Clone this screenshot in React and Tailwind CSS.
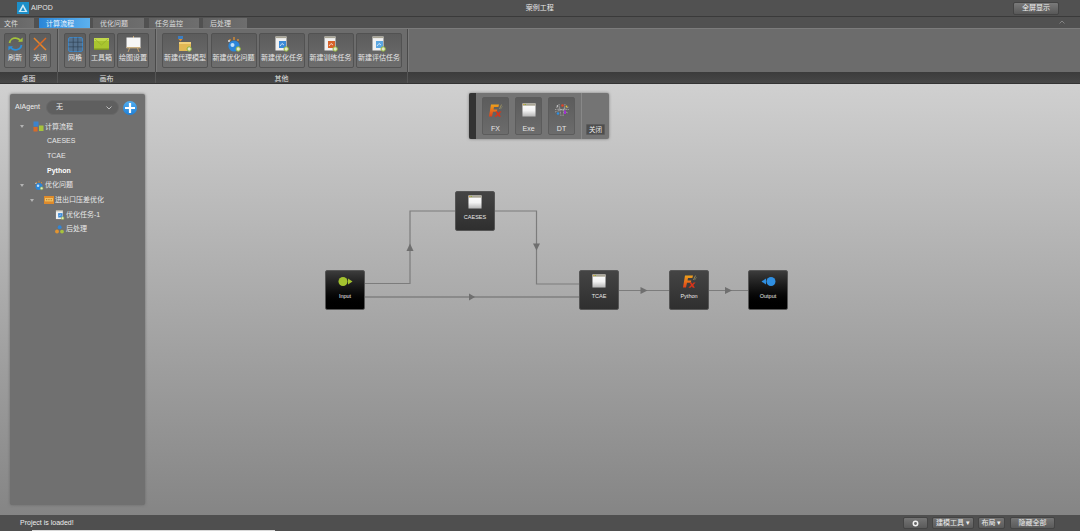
function WindowIcon({ s = 14 }) {
  return (
    <svg width={s} height={s} viewBox="0 0 15 15">
      <defs>
        <linearGradient id="win" x1="0" y1="0" x2="0" y2="1">
          <stop offset="0" stopColor="#ffffff" />
          <stop offset="0.55" stopColor="#f2f2f2" />
          <stop offset="1" stopColor="#b5b5b5" />
        </linearGradient>
      </defs>
      <rect x="0.5" y="0.5" width="14" height="14" fill="url(#win)" />
      <rect x="0.5" y="0.5" width="14" height="2.4" fill="#a9a595" />
      <rect x="1.2" y="1" width="1.3" height="1.2" fill="#e0a030" />
      <rect x="3" y="1" width="1.3" height="1.2" fill="#8cae3c" />
    </svg>
  );
}

function FxIcon({ s = 15 }) {
  return (
    <svg width={s} height={s} viewBox="0 0 15 15">
      <defs>
        <linearGradient id="fx" x1="0" y1="0" x2="0" y2="1">
          <stop offset="0" stopColor="#eda21c" />
          <stop offset="1" stopColor="#e2401a" />
        </linearGradient>
      </defs>
      <path d="M3 1.5H11L10.4 4H6L5.5 6.4H9.3L8.7 8.8H5L4 13.5H1Z" fill="url(#fx)" />
      <path d="M7.5 8.6H9.6L10.4 10 11.6 8.6H13.6L11.3 11.1 12.9 13.8H10.8L9.9 12.2 8.5 13.8H6.4L9 11Z" fill="#d8341a" />
      <path d="M11.5 6 13.5 1.6" stroke="#a89a60" strokeWidth="0.8" fill="none" />
      <path d="M12.6 6.2 14.5 3.2" stroke="#8b8b70" strokeWidth="0.6" fill="none" />
    </svg>
  );
}

function DtIcon() {
  return (
    <svg width="16" height="16" viewBox="0 0 16 16">
      <path d="M1 10 15 5M2 5 14 11M1 7.5H15M5 2 7 14M11 2 9 14" stroke="#c5c5c5" strokeWidth="0.6" strokeDasharray="1 0.6" fill="none" />
      <circle cx="8.5" cy="3.5" r="1.3" fill="#e0442a" />
      <circle cx="4" cy="11.5" r="1.3" fill="#2f8fe0" />
      <rect x="10" y="8.5" width="2" height="3.5" fill="#a030d0" />
      <circle cx="12.5" cy="4.5" r="0.9" fill="#e8c030" />
      <circle cx="3.5" cy="4" r="0.8" fill="#f0f0f0" />
    </svg>
  );
}

function RefreshIcon() {
  return (
    <svg width="17" height="16" viewBox="0 0 17 16" fill="none">
      <path d="M2.5 7C3 3.5 6 1.8 9 2.2 11 2.4 12.6 3.4 13.5 5" stroke="#a3c23b" strokeWidth="1.8" />
      <path d="M11 5.8H15.6V1.4Z" fill="#a3c23b" />
      <path d="M14.5 9C14 12.5 11 14.2 8 13.8 6 13.6 4.4 12.6 3.5 11" stroke="#2d8fd8" strokeWidth="1.8" />
      <path d="M6 10.2H1.4V14.6Z" fill="#2d8fd8" />
    </svg>
  );
}

function CloseIcon() {
  return (
    <svg width="16" height="16" viewBox="0 0 16 16" fill="none">
      <path d="M2 2 14 14" stroke="#e8842a" strokeWidth="1.5" />
      <path d="M14 2 2 14" stroke="#e06a22" strokeWidth="1.5" />
    </svg>
  );
}

function GridIcon() {
  return (
    <svg width="15" height="15" viewBox="0 0 15 15" fill="none">
      <rect x="0.5" y="0.5" width="14" height="14" rx="1.5" fill="#56718c" stroke="#3f86c4" />
      <path d="M5.2 0.5V14.5M9.8 0.5V14.5M0.5 5.2H14.5M0.5 9.8H14.5" stroke="#2c3d4e" strokeWidth="0.6" />
    </svg>
  );
}

function ToolboxIcon() {
  return (
    <svg width="15" height="12" viewBox="0 0 15 12">
      <rect x="0" y="0" width="15" height="12" fill="#a9c52f" />
      <rect x="0" y="0" width="15" height="3" fill="#c1d84b" />
      <path d="M1 1 7.5 7 14 1" stroke="#8ea528" strokeWidth="0.6" fill="none" />
      <rect x="0" y="10.5" width="15" height="1.5" fill="#7f9424" />
    </svg>
  );
}

function EaselIcon() {
  return (
    <svg width="15" height="16" viewBox="0 0 15 16">
      <path d="M4 11 2 16M11 11 13 16M7.5 0V2" stroke="#caa46a" strokeWidth="1" />
      <rect x="0.5" y="1.5" width="14" height="10.5" fill="#f6f6f6" />
      <rect x="0.5" y="11" width="14" height="1.4" fill="#c9b084" />
    </svg>
  );
}

function Badge() {
  return <circle cx="12.2" cy="13" r="2.2" fill="#e6e6c8" stroke="#8fb53a" strokeWidth="1" />;
}

function ModelIcon() {
  return (
    <svg width="16" height="17" viewBox="0 0 16 17">
      <rect x="1" y="0" width="5" height="3" fill="#3d7dc0" />
      <path d="M1.5 3H5.5L3.5 5.5Z" fill="#e09030" />
      <rect x="2" y="6" width="12" height="9" fill="#e2b854" />
      <rect x="2" y="6" width="12" height="2" fill="#f0d07c" />
      <Badge />
    </svg>
  );
}

function OptIcon({ s = 16 }) {
  return (
    <svg width={s} height={s + 1} viewBox="0 0 16 17">
      <circle cx="8" cy="10" r="5.6" fill="#2b86d9" />
      <circle cx="6.5" cy="9" r="2" fill="#bfe0fa" />
      <path d="M4 3V5M8 1V4M12 3V5" stroke="#e09030" strokeWidth="1.3" />
      <circle cx="3" cy="5" r="1" fill="#e2e2e2" />
      <Badge />
    </svg>
  );
}

function DocIcon({ c = "#3a8ad8", s = 16 }) {
  return (
    <svg width={s} height={s} viewBox="0 0 16 16">
      <rect x="1.5" y="0.5" width="11" height="14" fill="#f1f1f1" />
      <rect x="1.5" y="0.5" width="11" height="1.6" fill="#a9a595" />
      <rect x="5" y="5" width="7" height="7" fill={c} />
      <path d="M6 10 8 7.5 10 9" stroke="#fff" strokeWidth="0.7" fill="none" />
      <Badge />
    </svg>
  );
}

function FlowIcon() {
  return (
    <svg width="11" height="11" viewBox="0 0 11 11">
      <rect x="0.5" y="0.5" width="5" height="5" fill="#3c83cc" />
      <rect x="0.5" y="6" width="4" height="4.5" fill="#d86a2a" />
      <rect x="6" y="4.5" width="4.5" height="5.5" fill="#a7c43c" />
    </svg>
  );
}

function FolderIcon() {
  return (
    <svg width="10" height="8" viewBox="0 0 10 8">
      <rect x="0" y="0" width="10" height="8" fill="#dd8a2c" />
      <rect x="1" y="2" width="8" height="3.4" fill="#f1c261" />
      <path d="M2 3.7H8" stroke="#a85f1a" strokeWidth="0.8" strokeDasharray="1 0.7" />
    </svg>
  );
}

function PostIcon() {
  return (
    <svg width="9" height="9" viewBox="0 0 9 9">
      <circle cx="4.7" cy="2.2" r="1.9" fill="#2f86d8" />
      <circle cx="2" cy="6.5" r="1.9" fill="#e39430" />
      <circle cx="7" cy="6.6" r="1.9" fill="#a8c23d" />
    </svg>
  );
}

function Tri() {
  return <span className="w-0 h-0 border-l-[2.5px] border-r-[2.5px] border-t-[3px] border-l-transparent border-r-transparent border-t-[#b4b4b4]" />;
}

function RibbonBtn({ w, icon, label }) {
  return (
    <button
      style={{ width: w }}
      className="h-[35px] shrink-0 flex flex-col items-center rounded-[2px] border border-[#525252] bg-gradient-to-b from-[#5c5c5c] to-[#6e6e6e] pt-[1px]"
    >
      <span className="h-[18px] flex items-center justify-center">{icon}</span>
      <span className="text-[7px] leading-[10px] text-[#e6e6e6] whitespace-nowrap">{label}</span>
    </button>
  );
}

function Tab({ w, pl, label, active }) {
  return (
    <div
      style={{ width: w, paddingLeft: pl }}
      className={
        "h-[10px] mt-[1px] text-[7px] leading-[11px] whitespace-nowrap " +
        (active
          ? "bg-gradient-to-r from-[#2a86d8] to-[#5cb1ee] text-[#f0f6fb]"
          : "bg-gradient-to-r from-[#626262] to-[#6e6e6e] text-[#dcdcdc]")
      }
    >
      {label}
    </div>
  );
}

function Sep() {
  return <div className="w-px self-stretch bg-[#4a4a4a] shadow-[1px_0_0_#7a7a7a]" />;
}

function TreeRow({ indent, tri, icon, label, strong }) {
  return (
    <div className="h-[14.7px] flex items-center" style={{ paddingLeft: indent }}>
      {tri && <span className="w-[13px] flex items-center shrink-0"><Tri /></span>}
      {icon && <span className="shrink-0 mr-[1px] flex justify-center items-center w-[11px]">{icon}</span>}
      <span className={"text-[7px] whitespace-nowrap " + (strong ? "text-white font-bold" : "text-[#e8e8e8]")}>{label}</span>
    </div>
  );
}

function Node({ x, y, black, icon, label }) {
  return (
    <div
      style={{ left: x, top: y - 84 }}
      className={
        "absolute w-[40px] h-[40px] rounded-[2px] border border-[#555] flex flex-col items-center pt-[1px] " +
        (black ? "bg-gradient-to-b from-[#3c3c3c] to-[#000]" : "bg-gradient-to-b from-[#444] to-[#2f2f2f]")
      }
    >
      <span className="h-[18px] flex items-center justify-center">{icon}</span>
      <span className="mt-[2px] text-[5.5px] leading-[8px] text-[#eaeaea]">{label}</span>
    </div>
  );
}

function Arrow({ d }) {
  return <path d={d} fill="#6f6f6f" />;
}

function Links() {
  const line = { stroke: "#7c7c7c", strokeWidth: 1.2, fill: "none" };
  return (
    <svg className="absolute inset-0 w-full h-full" viewBox="0 84 1080 431">
      <path d="M365 283.5H410V211H455" {...line} />
      <path d="M495 211H536.5V284H579" {...line} />
      <path d="M365 297H579" stroke="#7f7f7f" strokeWidth="1.4" fill="none" />
      <path d="M618 290.5H669" {...line} />
      <path d="M708 290.5H748" {...line} />
      <Arrow d="M410 243.5 413.5 251H406.5Z" />
      <Arrow d="M536.5 250.5 533 243.5H540Z" />
      <Arrow d="M475 297 469 293.5V300.5Z" />
      <Arrow d="M647.5 290.5 640.5 287V294Z" />
      <Arrow d="M732 290.5 725 287V294Z" />
    </svg>
  );
}

function PaletteBtn({ icon, label }) {
  return (
    <button className="w-[27px] h-[38px] shrink-0 flex flex-col items-center rounded-[2px] border border-[#5c5c5c] bg-gradient-to-b from-[#5c5c5c] to-[#6c6c6c] pt-[3px]">
      <span className="h-[18px] flex items-center justify-center">{icon}</span>
      <span className="mt-[5px] text-[7px] leading-[10px] text-[#e6e6e6]">{label}</span>
    </button>
  );
}

function FootBtn({ w, children }) {
  return (
    <button
      style={{ width: w }}
      className="h-[12px] rounded-[2px] border border-[#444] bg-gradient-to-b from-[#757575] to-[#5a5a5a] text-[7px] leading-[10px] text-[#ececec] flex items-center justify-center whitespace-nowrap"
    >
      {children}
    </button>
  );
}

export default function App() {
  const font = { fontFamily: '"Liberation Sans", "Noto Sans CJK SC", sans-serif' };
  return (
    <div style={font} className="relative w-[1080px] h-[531px] overflow-hidden flex flex-col bg-[#505050]">
      {/* title bar */}
      <div className="h-[17px] shrink-0 flex items-center bg-[#515151] pl-[17px] pr-[21px] border-b border-[#3a3a3a]">
        <svg width="12" height="12" viewBox="0 0 12 12">
          <rect width="12" height="12" fill="#1c8fc9" />
          <path d="M6 2 10.5 10H1.5Z" fill="#cfeaf6" />
          <path d="M6 5 8 9H4Z" fill="#1c8fc9" />
        </svg>
        <span className="ml-[2px] text-[7px] text-[#e4e4e4]">AIPOD</span>
        <span className="ml-[473px] text-[7px] text-[#e8e8e8]">案例工程</span>
        <button className="ml-auto w-[46px] h-[13px] rounded-[2px] border border-[#444] bg-gradient-to-b from-[#7a7a7a] to-[#585858] text-[7px] leading-[10px] text-[#eeeeee]">全屏显示</button>
      </div>

      {/* tabs */}
      <div className="h-[11px] shrink-0 flex items-start bg-[#515151] relative">
        <Tab w={34} pl={4} label="文件" />
        <div className="ml-[5px]"><Tab w={51} pl={7} label="计算流程" active /></div>
        <div className="ml-[3px]"><Tab w={51} pl={7} label="优化问题" /></div>
        <div className="ml-[5px]"><Tab w={50} pl={6} label="任务监控" /></div>
        <div className="ml-[4px]"><Tab w={44} pl={7} label="后处理" /></div>
        <svg className="absolute right-[15px] top-[3px]" width="6" height="4" viewBox="0 0 6 4" fill="none">
          <path d="M0.5 3.5 3 1 5.5 3.5" stroke="#9a9a9a" strokeWidth="0.7" />
        </svg>
      </div>

      {/* ribbon */}
      <div className="h-[44px] shrink-0 flex items-center bg-[#6c6c6c] border-t border-[#7c7c7c]">
        <div className="w-[57px] h-full flex items-center gap-[3px] pl-[4px]">
          <RibbonBtn w={22} icon={<RefreshIcon />} label="刷新" />
          <RibbonBtn w={22} icon={<CloseIcon />} label="关闭" />
        </div>
        <Sep />
        <div className="w-[97px] h-full flex items-center gap-[2.5px] pl-[6px]">
          <RibbonBtn w={22} icon={<GridIcon />} label="网格" />
          <RibbonBtn w={26} icon={<ToolboxIcon />} label="工具箱" />
          <RibbonBtn w={32} icon={<EaselIcon />} label="绘图设置" />
        </div>
        <Sep />
        <div className="w-[251px] h-full flex items-center gap-[2.5px] pl-[6px]">
          <RibbonBtn w={46} icon={<ModelIcon />} label="新建代理模型" />
          <RibbonBtn w={46} icon={<OptIcon />} label="新建优化问题" />
          <RibbonBtn w={46} icon={<DocIcon />} label="新建优化任务" />
          <RibbonBtn w={46} icon={<DocIcon c="#d8622a" />} label="新建训练任务" />
          <RibbonBtn w={46} icon={<DocIcon c="#5aa6e2" />} label="新建评估任务" />
        </div>
        <Sep />
      </div>

      {/* ribbon group labels */}
      <div className="h-[12px] shrink-0 flex bg-gradient-to-b from-[#3c3c3c] to-[#474747] text-[7px] leading-[13px] text-[#e2e2e2] border-b border-[#333]">
        <div className="w-[57px] text-center">桌面</div>
        <div className="w-px bg-[#555]" />
        <div className="w-[97px] text-center">画布</div>
        <div className="w-px bg-[#555]" />
        <div className="w-[251px] text-center">其他</div>
        <div className="w-px bg-[#555]" />
      </div>

      {/* canvas */}
      <div className="relative flex-1 min-h-0 bg-gradient-to-b from-[#d0d0d0] to-[#858585] p-[10px]">
        <Links />
        <aside className="relative w-[135px] h-full rounded-[2px] bg-[#707070] shadow-[0_0_3px_#6a6a6a] pt-[5px]">
          <div className="flex items-center h-[17px] pl-[5px]">
            <span className="text-[7px] text-[#eeeeee] w-[31px]">AIAgent</span>
            <div className="w-[73px] h-[15px] rounded-full bg-[#5f5f5f] border border-[#686868] flex items-center justify-between pl-[9px] pr-[6px] text-[7px] text-[#eeeeee]">
              无
              <svg width="6" height="4" viewBox="0 0 6 4" fill="none"><path d="M0.5 0.5 3 3 5.5 0.5" stroke="#d8d8d8" strokeWidth="0.8" /></svg>
            </div>
            <svg className="ml-[4px]" width="14" height="14" viewBox="0 0 14 14">
              <defs>
                <linearGradient id="plus" x1="0" y1="0" x2="0" y2="1">
                  <stop offset="0" stopColor="#52aef0" />
                  <stop offset="1" stopColor="#1f7fd6" />
                </linearGradient>
              </defs>
              <circle cx="7" cy="7" r="7" fill="url(#plus)" />
              <path d="M7 2V12M2 7H12" stroke="#fff" strokeWidth="2.2" />
            </svg>
          </div>
          <div className="mt-[3.5px]">
            <TreeRow indent={10} tri icon={<FlowIcon />} label="计算流程" />
            <TreeRow indent={37} label="CAESES" />
            <TreeRow indent={37} label="TCAE" />
            <TreeRow indent={37} label="Python" strong />
            <TreeRow indent={10} tri icon={<OptIcon s={10} />} label="优化问题" />
            <TreeRow indent={20} tri icon={<FolderIcon />} label="进出口压差优化" />
            <TreeRow indent={44} icon={<DocIcon s={10} />} label="优化任务-1" />
            <TreeRow indent={44} icon={<PostIcon />} label="后处理" />
          </div>
        </aside>

        {/* floating palette */}
        <div className="absolute left-[469px] top-[9px] w-[140px] h-[46px] flex items-center rounded-[2px] bg-[#747474] shadow-[0_0_3px_#777]">
          <div className="w-[7px] h-full bg-[#333] rounded-l-[2px]" />
          <div className="flex items-center gap-[6px] pl-[6px] w-[105px] h-full">
            <PaletteBtn icon={<FxIcon />} label="FX" />
            <PaletteBtn icon={<WindowIcon />} label="Exe" />
            <PaletteBtn icon={<DtIcon />} label="DT" />
          </div>
          <div className="w-px h-full bg-[#888]" />
          <div className="flex-1 h-full flex items-end pb-[4px] pl-[4px]">
            <button className="w-[19px] h-[11px] bg-[#4e4e4e] border border-[#5c5c5c] text-[6.5px] leading-[9px] text-[#eeeeee] rounded-[1px]">关闭</button>
          </div>
        </div>

        <Node x={325} y={270} black label="Input" icon={
          <svg width="15" height="11" viewBox="0 0 15 11">
            <circle cx="5" cy="5.5" r="4.5" fill="#a3c22f" />
            <path d="M10 2.5 14.5 5.5 10 8.5Z" fill="#a3c22f" />
          </svg>
        } />
        <Node x={455} y={191} label="CAESES" icon={<WindowIcon />} />
        <Node x={579} y={270} label="TCAE" icon={<WindowIcon />} />
        <Node x={669} y={270} label="Python" icon={<FxIcon />} />
        <Node x={748} y={270} black label="Output" icon={
          <svg width="15" height="11" viewBox="0 0 15 11">
            <circle cx="10" cy="5.5" r="4.5" fill="#2f8fe2" />
            <path d="M5 2.5 0.5 5.5 5 8.5Z" fill="#2f8fe2" />
          </svg>
        } />
      </div>

      {/* status bar */}
      <div className="relative h-[16px] shrink-0 flex items-center bg-[#4f4f4f] pl-[20px] pr-[25px]">
        <span className="text-[7px] text-[#eeeeee]">Project is loaded!</span>
        <div className="ml-auto flex items-center gap-[4px]">
          <FootBtn w={25}>
            <svg width="7" height="7" viewBox="0 0 7 7"><circle cx="3.5" cy="3.5" r="2.2" fill="none" stroke="#f2f2f2" strokeWidth="1.5" /></svg>
          </FootBtn>
          <FootBtn w={42}>建模工具 ▾</FootBtn>
          <FootBtn w={27}>布局 ▾</FootBtn>
          <div className="ml-[1px]"><FootBtn w={45}>隐藏全部</FootBtn></div>
        </div>
        <div className="absolute left-[32px] bottom-0 w-[243px] h-px bg-[#d8d8d8]" />
      </div>
    </div>
  );
}
